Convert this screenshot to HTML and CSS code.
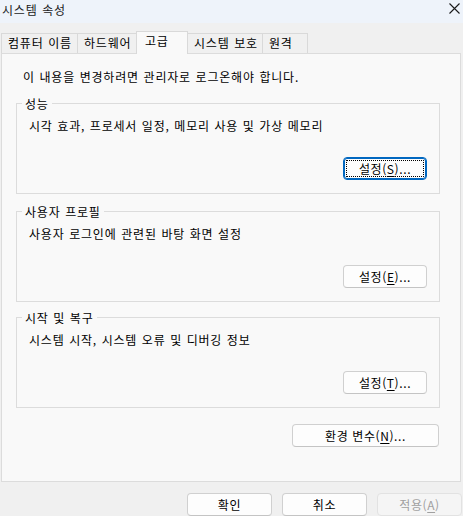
FILE: index.html
```html
<!DOCTYPE html>
<html lang="ko">
<head>
<meta charset="utf-8">
<title>시스템 속성</title>
<link rel="stylesheet" href="styles.css">
</head>
<body>
<div class="window">
  <div class="titlebar">
    <span class="title">시스템 속성</span>
    <svg class="close" width="11" height="11" viewBox="0 0 11 11"><path d="M0.5 0.5 L10.5 10.5 M10.5 0.5 L0.5 10.5" stroke="#1a1a1a" stroke-width="1.1" fill="none"/></svg>
  </div>
  <div class="main">
    <div class="tabs">
      <div class="tab t1">컴퓨터 이름</div>
      <div class="tab t2">하드웨어</div>
      <div class="tab t3 active">고급</div>
      <div class="tab t4">시스템 보호</div>
      <div class="tab t5">원격</div>
    </div>
    <div class="panel">
      <p class="info">이 내용을 변경하려면 관리자로 로그온해야 합니다.</p>
      <section class="group g1">
        <div class="group-title">성능</div>
        <p class="desc">시각 효과, 프로세서 일정, 메모리 사용 및 가상 메모리</p>
        <div class="row"><button class="btn small focused">설정(<u>S</u>)...</button></div>
      </section>
      <section class="group g2">
        <div class="group-title">사용자 프로필</div>
        <p class="desc">사용자 로그인에 관련된 바탕 화면 설정</p>
        <div class="row"><button class="btn small">설정(<u>E</u>)...</button></div>
      </section>
      <section class="group g3">
        <div class="group-title">시작 및 복구</div>
        <p class="desc">시스템 시작, 시스템 오류 및 디버깅 정보</p>
        <div class="row"><button class="btn small">설정(<u>T</u>)...</button></div>
      </section>
      <div class="row env"><button class="btn wide">환경 변수(<u>N</u>)...</button></div>
    </div>
    <div class="footer">
      <button class="btn foot">확인</button>
      <button class="btn foot">취소</button>
      <button class="btn foot disabled">적용(<u>A</u>)</button>
    </div>
  </div>
</div>
</body>
</html>
```
FILE: styles.css
```css
* { box-sizing: border-box; }
html, body {
  margin: 0;
  padding: 0;
  width: 463px;
  height: 516px;
  overflow: hidden;
  background: #f0f0f0;
}
body {
  font-family: "Noto Sans CJK KR", "Noto Sans", sans-serif;
  font-size: 12px;
  letter-spacing: 0.8px;
  word-spacing: 0.5px;
  color: #000;
}
.window { width: 463px; height: 516px; }
.titlebar {
  height: 23px;
  background: #eef3fa;
  display: flex;
  align-items: flex-start;
  justify-content: space-between;
  padding: 2px 2px 0 2px;
}
.title { line-height: 16px; color: #1a1a1a; }
.close { margin-top: 1px; margin-right: 1px; }
.main { background: #f0f0f0; padding-top: 8px; }
.tabs {
  display: flex;
  align-items: flex-end;
  height: 22px;
  padding-left: 1px;
  position: relative;
  z-index: 1;
}
.tab {
  height: 20px;
  border: 1px solid #d9d9d9;
  border-bottom: none;
  background: #f0f0f0;
  padding-left: 6px;
  line-height: 18px;
  white-space: nowrap;
  margin-left: -1px;
}
.t1 { width: 77px; margin-left: 0; }
.t2 { width: 61px; }
.t3 { width: 52px; margin-left: -2px; }
.t4 { width: 76px; margin-left: -1px; }
.t5 { width: 46px; }
.tab.active {
  height: 23px;
  margin-bottom: -1px;
  background: #f9f9f9;
  padding-left: 8px;
  line-height: 17px;
  position: relative;
  z-index: 2;
}
.panel {
  margin-left: 1px;
  width: 460px;
  height: 429px;
  background: #f9f9f9;
  border: 1px solid #dcdcdc;
  padding: 15px 20px 0 14px;
}
.info { margin: 0 0 18px 0; padding-left: 7px; line-height: 16px; }
.group {
  height: 91px;
  border: 1px solid #dcdcdc;
  padding: 0 12px 13px 12px;
  display: flex;
  flex-direction: column;
}
.g2 { margin-top: 17px; }
.g3 { margin-top: 15px; }
.group-title {
  align-self: flex-start;
  margin: -8px 0 0 -7px;
  padding: 0 3px;
  background: #f9f9f9;
  line-height: 15px;
}
.desc { margin: 7px 0 0 0; line-height: 16px; }
.row { display: flex; justify-content: flex-end; }
.group .row { margin-top: auto; }
.env { margin-top: 16px; }
.btn {
  font-family: inherit;
  font-size: 12px;
  letter-spacing: 0.6px;
  color: #000;
  height: 23px;
  background: #fdfdfd;
  border: 1px solid #d0d0d0;
  border-bottom-color: #c4c4c4;
  border-radius: 4px;
  padding: 0;
  line-height: 20px;
  cursor: default;
}
.btn u { text-underline-offset: 2px; }
.small { width: 84px; }
.wide { width: 147px; margin-right: 1px; }
.focused {
  border: 1px solid #0067c0;
  box-shadow: inset 0 0 0 1px #0067c0;
  outline: 1px dotted #000;
  outline-offset: -4px;
}
.footer {
  display: flex;
  justify-content: flex-end;
  gap: 10px;
  padding-right: 1px;
  margin-top: 11px;
}
.foot { width: 85px; }
.disabled {
  color: #a0a0a0;
  background: #f5f5f5;
  border-color: #e2e2e2;
}
```
